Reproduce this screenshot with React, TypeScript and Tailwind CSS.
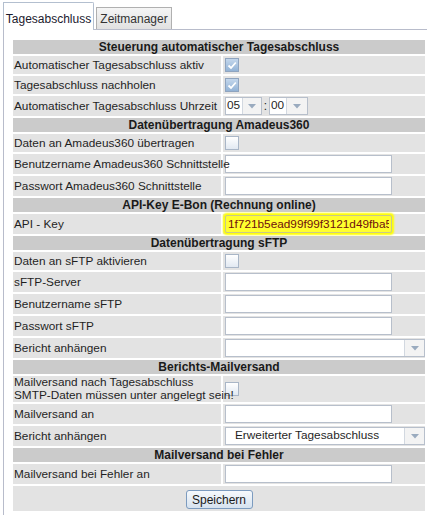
import type { ReactNode } from 'react'

const ROW_BG = 'bg-[#e3e3e3]'

function Header({ children }: { children: ReactNode }) {
  return (
    <tr>
      <td
        colSpan={2}
        className="h-[14px] bg-[#cbcbcb] p-0 text-center align-middle text-[12px] font-bold leading-[14px] text-[#1a1a1a]"
      >
        {children}
      </td>
    </tr>
  )
}

function Row({
  label,
  height = 'h-[20px]',
  children,
}: {
  label: ReactNode
  height?: string
  children?: ReactNode
}) {
  return (
    <tr>
      <td
        className={`${height} ${ROW_BG} whitespace-nowrap p-0 pl-[1px] align-middle text-[11.8px] leading-[13px] text-[#1f1f1f]`}
      >
        {label}
      </td>
      <td className={`${height} ${ROW_BG} p-0 pl-[2px] align-middle`}>{children}</td>
    </tr>
  )
}

function Checkbox({ checked = false }: { checked?: boolean }) {
  if (checked) {
    return (
      <div className="flex h-[14px] w-[14px] items-center justify-center border border-[#8fa4bf] bg-gradient-to-b from-[#c4d7ec] to-[#93b3d6]">
        <svg width="10" height="9" viewBox="0 0 10 9" fill="none">
          <path d="M1.5 4.5 L4 7 L8.8 1.5" stroke="white" strokeWidth="1.8" />
        </svg>
      </div>
    )
  }
  return (
    <div className="h-[14px] w-[14px] border border-[#a9b6c7] bg-gradient-to-b from-[#ffffff] to-[#e2e9f2]" />
  )
}

function TextInput({ value = '' }: { value?: string }) {
  return (
    <input
      type="text"
      readOnly
      value={value}
      className="block h-[18px] w-[167px] border border-[#b7bfcb] bg-white px-[2px] text-[12px] text-[#222] outline-none"
    />
  )
}

function Arrow() {
  return (
    <svg width="8" height="5" viewBox="0 0 8 5">
      <path d="M0 0 H8 L4 4.5 Z" fill="#9aabbf" />
    </svg>
  )
}

function Select({
  value = '',
  width,
  arrowWidth,
  textPad = 'pl-[1px]',
}: {
  value?: string
  width: string
  arrowWidth: string
  textPad?: string
}) {
  return (
    <div className={`flex h-[18px] ${width} border border-[#b7bfcb] bg-white`}>
      <div
        className={`flex flex-1 items-center overflow-hidden whitespace-nowrap ${textPad} text-[11.8px] leading-none text-[#1f1f1f]`}
      >
        {value}
      </div>
      <div className={`flex ${arrowWidth} items-center justify-center border-l border-[#d2d8e0] bg-[#f3f3f3]`}>
        <Arrow />
      </div>
    </div>
  )
}

export default function App() {
  return (
    <div className="h-[515px] w-[427px] overflow-hidden bg-white font-['Liberation_Sans',Arial,sans-serif]">
      <div className="flex h-[29px] items-end gap-[2px] pl-[3px] pt-[2px]">
        <div className="relative z-10 -mb-px flex h-[28px] w-[91px] items-center justify-center rounded-tr-[2px] border border-b-0 border-[#b3bfcf] bg-white pt-[4px] text-[12px] text-[#1b1a2e]">
          Tagesabschluss
        </div>
        <div className="flex h-[22px] w-[76px] items-center justify-center border border-b-0 border-[#b0b0b0] bg-gradient-to-b from-[#f5f5f5] to-[#e1e1e1] text-[12px] text-[#333]">
          Zeitmanager
        </div>
      </div>

      <div className="ml-[3px] h-[486px] border-l border-t border-[#b8bccb] pl-[7px] pt-[8px]">
        <table className="w-[416px] table-fixed border-separate border-spacing-[2px]">
          <colgroup>
            <col className="w-[208px]" />
            <col />
          </colgroup>
          <tbody>
            <Header>Steuerung automatischer Tagesabschluss</Header>
            <Row label="Automatischer Tagesabschluss aktiv" height="h-[18px]">
              <Checkbox checked />
            </Row>
            <Row label="Tagesabschluss nachholen" height="h-[18px]">
              <Checkbox checked />
            </Row>
            <Row label="Automatischer Tagesabschluss Uhrzeit">
              <div className="flex items-center">
                <Select value="05" width="w-[37px]" arrowWidth="w-[19px]" />
                <span className="w-[7px] text-center text-[12px] text-[#222]">:</span>
                <Select value="00" width="w-[39px]" arrowWidth="w-[21px]" />
              </div>
            </Row>

            <Header>Datenübertragung Amadeus360</Header>
            <Row label="Daten an Amadeus360 übertragen" height="h-[18px]">
              <Checkbox />
            </Row>
            <Row label="Benutzername Amadeus360 Schnittstelle">
              <TextInput />
            </Row>
            <Row label="Passwort Amadeus360 Schnittstelle">
              <TextInput />
            </Row>

            <Header>API-Key E-Bon (Rechnung online)</Header>
            <Row label="API - Key">
              <input
                type="text"
                readOnly
                value="1f721b5ead99f99f3121d49fba5bc7e2"
                className="block h-[18px] w-[167px] rounded-[2px] border border-[#c9c98a] bg-[#ffff2e] px-[2px] text-[11.8px] text-[#6e0f0f] shadow-[0_0_2px_2px_#ffff00] outline-none"
              />
            </Row>

            <Header>Datenübertragung sFTP</Header>
            <Row label="Daten an sFTP aktivieren" height="h-[18px]">
              <Checkbox />
            </Row>
            <Row label="sFTP-Server">
              <TextInput />
            </Row>
            <Row label="Benutzername sFTP">
              <TextInput />
            </Row>
            <Row label="Passwort sFTP">
              <TextInput />
            </Row>
            <Row label="Bericht anhängen">
              <Select width="w-[200px]" arrowWidth="w-[20px]" />
            </Row>

            <Header>Berichts-Mailversand</Header>
            <Row
              height="h-[26px]"
              label={
                <>
                  Mailversand nach Tagesabschluss
                  <br />
                  SMTP-Daten müssen unter angelegt sein!
                </>
              }
            >
              <Checkbox />
            </Row>
            <Row label="Mailversand an">
              <TextInput />
            </Row>
            <Row label="Bericht anhängen">
              <Select
                value="Erweiterter Tagesabschluss"
                width="w-[200px]"
                arrowWidth="w-[20px]"
                textPad="pl-[9px]"
              />
            </Row>

            <Header>Mailversand bei Fehler</Header>
            <Row label="Mailversand bei Fehler an">
              <TextInput />
            </Row>

            <tr>
              <td colSpan={2} className={`h-[25px] ${ROW_BG} p-0 text-center align-middle`}>
                <button
                  type="button"
                  className="h-[19px] w-[67px] rounded-[3px] border border-[#7c9bbf] bg-gradient-to-b from-[#f6f9fc] to-[#d6e2ef] text-[12px] leading-none text-[#1a1a1a]"
                >
                  Speichern
                </button>
              </td>
            </tr>
          </tbody>
        </table>
      </div>
    </div>
  )
}
